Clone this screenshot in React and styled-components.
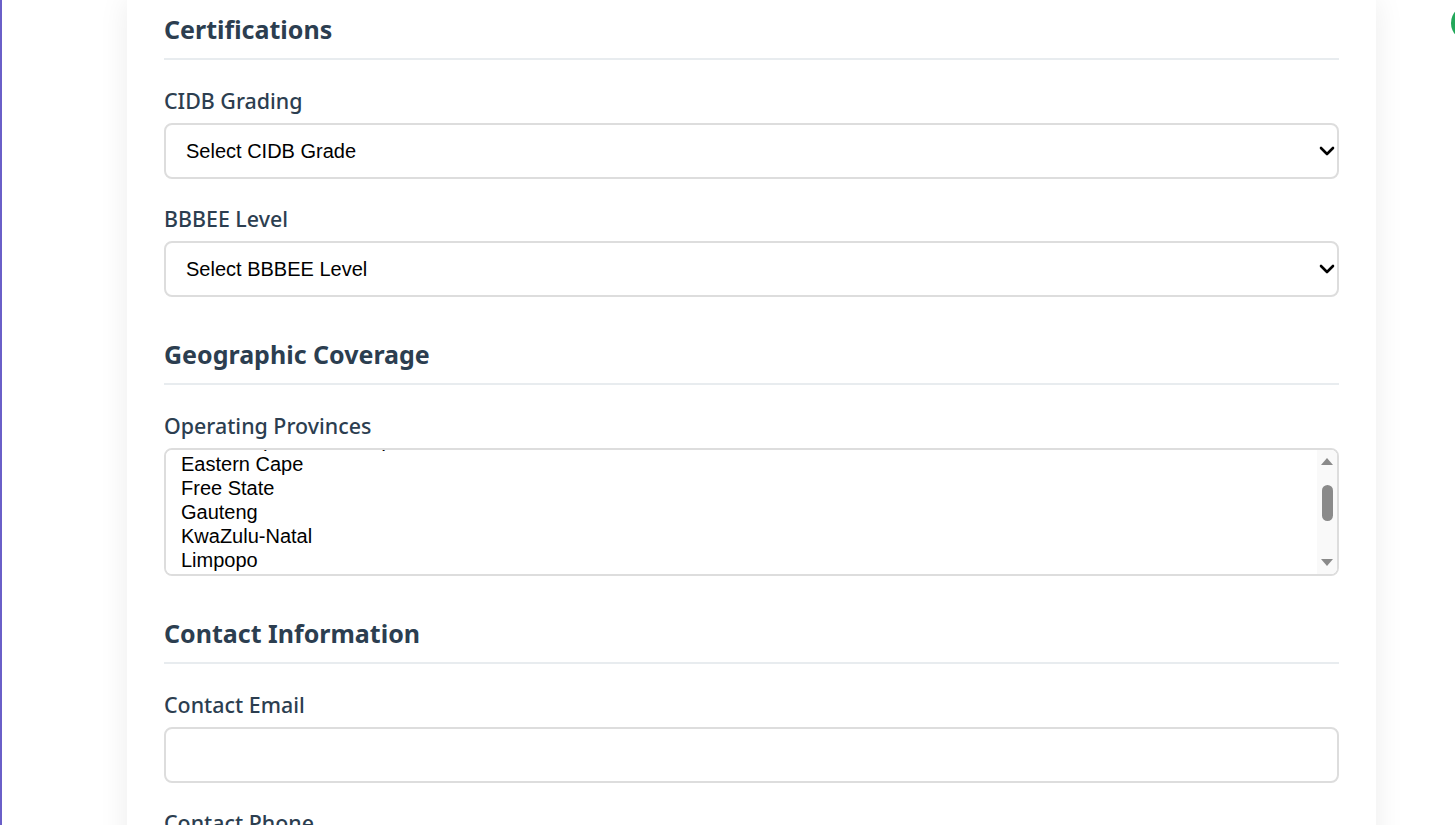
import React, { useEffect, useRef } from "react";
import styled, { createGlobalStyle } from "styled-components";
import { ChevronDown } from "lucide-react";

const GlobalStyle = createGlobalStyle`
  html, body {
    margin: 0;
    padding: 0;
    overflow: hidden;
    background: #fff;
  }
  body {
    border-left: 2px solid #6a5fc8;
    min-height: 100vh;
    font-family: "Noto Sans", "Open Sans", sans-serif;
  }
  * { box-sizing: border-box; }
`;

const provinces = [
  "Select provinces",
  "National (All Provinces)",
  "Eastern Cape",
  "Free State",
  "Gauteng",
  "KwaZulu-Natal",
  "Limpopo",
  "Mpumalanga",
  "North West",
  "Northern Cape",
  "Western Cape",
  "Cross-border (SADC)",
];

function Dropdown({ placeholder, options }) {
  return (
    <SelectWrap>
      <Select defaultValue="">
        <option value="">{placeholder}</option>
        {options.map((o) => (
          <option key={o}>{o}</option>
        ))}
      </Select>
      <Chevron size={24} strokeWidth={2.6} />
    </SelectWrap>
  );
}

// headless page hides native scrollbars, so the list gets a drawn one
function ProvinceList() {
  const listRef = useRef(null);

  useEffect(() => {
    if (listRef.current) listRef.current.scrollTop = 57;
  }, []);

  return (
    <SelectWrap>
      <ListBox multiple ref={listRef}>
        {provinces.map((p) => (
          <option key={p}>{p}</option>
        ))}
      </ListBox>
      <ScrollBar>
        <Arrow $up />
        <Track>
          <Thumb />
        </Track>
        <Arrow />
      </ScrollBar>
    </SelectWrap>
  );
}

function App() {
  return (
    <>
      <GlobalStyle />
      <Page>
        <Card>
          <SectionTitle $first>Certifications</SectionTitle>
          <Field>
            <Label>CIDB Grading</Label>
            <Dropdown
              placeholder="Select CIDB Grade"
              options={["Grade 1", "Grade 2", "Grade 3", "Grade 4", "Grade 5"]}
            />
          </Field>
          <Field>
            <Label>BBBEE Level</Label>
            <Dropdown
              placeholder="Select BBBEE Level"
              options={["Level 1", "Level 2", "Level 3", "Level 4"]}
            />
          </Field>

          <SectionTitle>Geographic Coverage</SectionTitle>
          <Field>
            <Label>Operating Provinces</Label>
            <ProvinceList />
          </Field>

          <SectionTitle>Contact Information</SectionTitle>
          <Field>
            <Label>Contact Email</Label>
            <Input type="email" />
          </Field>
          <Field>
            <Label>Contact Phone</Label>
            <Input type="tel" />
          </Field>
        </Card>
      </Page>
      <ChatBubble />
    </>
  );
}

const Page = styled.div`
  padding-left: 125px;
`;

const Card = styled.div`
  width: 1249px;
  background: #fff;
  padding: 13px 37px 40px 37px;
  border-radius: 0 0 12px 12px;
  box-shadow: 0 0 30px rgba(0, 0, 0, 0.08);
`;

const SectionTitle = styled.h3`
  margin: ${(p) => (p.$first ? "0" : "41px")} 0 27px 0;
  padding-bottom: 13px;
  border-bottom: 2px solid #e8ecef;
  font-size: 25px;
  line-height: 32px;
  font-weight: 700;
  color: #2c3e50;
`;

const Field = styled.div`
  margin-bottom: 26px;
`;

const Label = styled.label`
  display: block;
  margin-bottom: 8px;
  font-size: 21.4px;
  line-height: 28px;
  font-weight: 500;
  color: #2c3e50;
`;

const SelectWrap = styled.div`
  position: relative;
`;

const Select = styled.select`
  display: block;
  width: 100%;
  height: 56px;
  padding: 0 40px 0 20px;
  appearance: none;
  font-family: "Liberation Sans", Arial, sans-serif;
  font-size: 20px;
  color: #000;
  background: #fff;
  border: 2px solid #ddd;
  border-radius: 8px;
  outline: none;
`;

const Chevron = styled(ChevronDown)`
  position: absolute;
  right: 0px;
  top: 50%;
  transform: translateY(-50%);
  color: #000;
  pointer-events: none;
`;

const ListBox = styled.select`
  display: block;
  width: 100%;
  height: 128px;
  padding: 12px 30px 12px 13px;
  font-family: "Liberation Sans", Arial, sans-serif;
  font-size: 20px;
  color: #000;
  background: #fff;
  border: 2px solid #ddd;
  border-radius: 8px;
  overflow-y: scroll;
  outline: none;

  option {
    padding: 0 2px 1px;
  }
`;

const ScrollBar = styled.div`
  position: absolute;
  top: 2px;
  right: 2px;
  bottom: 2px;
  width: 20px;
  display: flex;
  flex-direction: column;
  align-items: center;
  background: #f9f9f9;
  border-radius: 0 6px 6px 0;
`;

const Arrow = styled.div`
  width: 0;
  height: 0;
  margin: ${(p) => (p.$up ? "8px 0 5px" : "5px 0 8px")};
  border-left: 6.5px solid transparent;
  border-right: 6.5px solid transparent;
  ${(p) =>
    p.$up ? "border-bottom: 7px solid #8a8a8a;" : "border-top: 7px solid #8a8a8a;"}
`;

const Track = styled.div`
  flex: 1;
  width: 100%;
  display: flex;
  justify-content: center;
`;

const Thumb = styled.div`
  width: 11px;
  height: 36px;
  margin-top: 15px;
  border-radius: 6px;
  background: #8a8a8a;
`;

const Input = styled.input`
  display: block;
  width: 100%;
  height: 56px;
  padding: 0 18px;
  font-family: "Liberation Sans", Arial, sans-serif;
  font-size: 20px;
  border: 2px solid #ddd;
  border-radius: 8px;
  background: #fff;
  outline: none;
`;

const ChatBubble = styled.div`
  position: fixed;
  top: 5px;
  right: -32px;
  width: 36px;
  height: 36px;
  border-radius: 50%;
  background: #22a85a;
`;

export default App;
